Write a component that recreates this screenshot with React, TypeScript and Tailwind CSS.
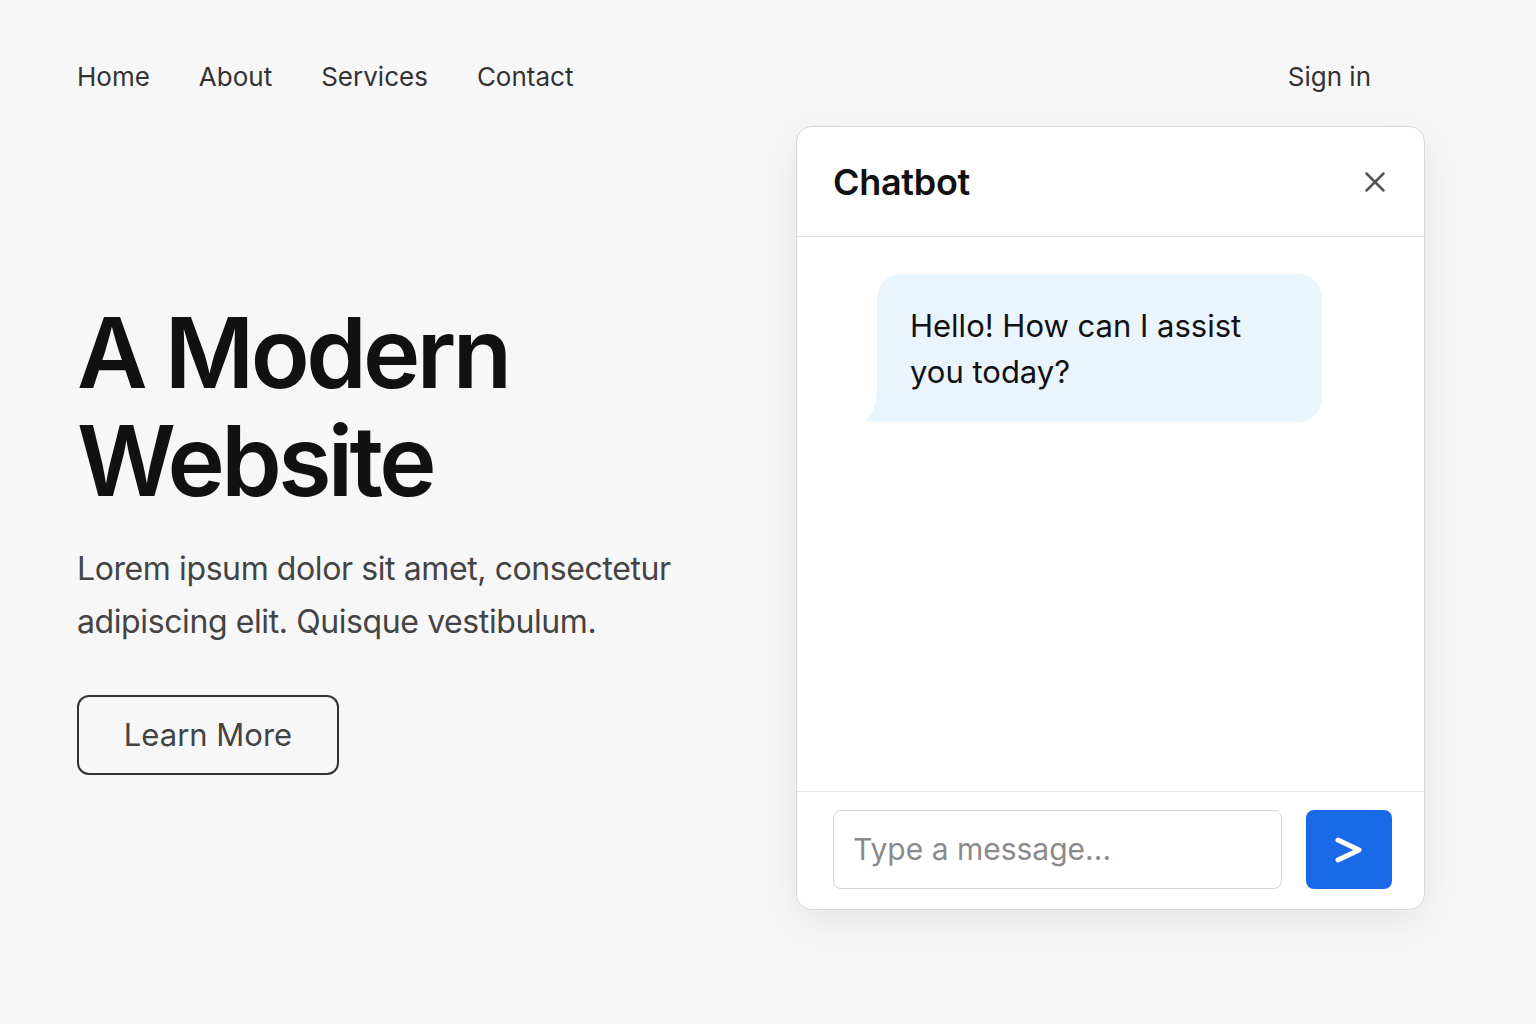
import { X } from "lucide-react";

const navLinks = ["Home", "About", "Services", "Contact"];

function BubbleTail() {
  return (
    <svg
      className="absolute -left-[14px] bottom-0"
      width="24"
      height="34"
      viewBox="0 0 24 34"
    >
      <path d="M14 0 C14 18 9 28 0 34 L24 34 L24 0 Z" fill="#eaf4fd" />
    </svg>
  );
}

function SendIcon() {
  return (
    <svg width="34" height="32" viewBox="0 0 34 32" fill="none">
      <path
        d="M6 6 L27 16 L6 26"
        stroke="white"
        strokeWidth="5"
        strokeLinecap="round"
        strokeLinejoin="round"
      />
    </svg>
  );
}

function ChatWidget() {
  return (
    <div className="w-[629px] h-[784px] flex flex-col bg-white border border-[#d9d9d9] rounded-[16px] shadow-[0_12px_40px_rgba(0,0,0,0.08)] overflow-hidden">
      <div className="h-[110px] shrink-0 flex items-center justify-between pl-[36px] pr-[32px] border-b border-[#e2e2e2]">
        <h2 className="text-[36px] font-semibold text-[#111] tracking-[-0.3px]">Chatbot</h2>
        <X className="w-[34px] h-[34px] text-[#555]" strokeWidth={1.8} />
      </div>
      <div className="flex-1 pt-[37px] pl-[80px]">
        <div className="relative w-[445px] h-[148px] bg-[#eaf4fd] rounded-[24px] rounded-bl-none pl-[33px] pt-[29px]">
          <BubbleTail />
          <p className="text-[31px] leading-[46px] text-[#111]">
            Hello! How can I assist
            <br />
            you today?
          </p>
        </div>
      </div>
      <div className="h-[118px] shrink-0 border-t border-[#e6e6e6] flex items-start pt-[18px] pl-[36px] gap-[24px]">
        <div className="w-[449px] h-[79px] border border-[#d4d4d4] rounded-[8px] flex items-center pl-[19px]">
          <span className="text-[30px] text-[#8a8a8a]">Type a message...</span>
        </div>
        <button className="w-[86px] h-[79px] bg-[#1a6ae8] rounded-[8px] flex items-center justify-center">
          <SendIcon />
        </button>
      </div>
    </div>
  );
}

export default function App() {
  return (
    <div className="min-h-[1024px] w-full bg-[#f7f7f7] font-['Inter','Noto_Sans',sans-serif]">
      <header className="h-[126px] flex items-start justify-between pt-[60px] pl-[77px] pr-[165px]">
        <nav className="flex gap-[49px]">
          {navLinks.map((link) => (
            <a key={link} className="text-[26px] leading-[34px] text-[#333]">
              {link}
            </a>
          ))}
        </nav>
        <a className="text-[26px] leading-[34px] text-[#333]">Sign in</a>
      </header>
      <main className="flex">
        <div className="flex-1 pl-[77px] pt-[173px]">
          <h1 className="text-[97px] leading-[108px] font-semibold text-[#111] tracking-[-3.6px]">
            A Modern
            <br />
            Website
          </h1>
          <p className="mt-[27px] text-[32px] leading-[53px] text-[#444] tracking-[-0.4px]">
            Lorem ipsum dolor sit amet, consectetur
            <br />
            adipiscing elit. Quisque vestibulum.
          </p>
          <button className="mt-[47px] w-[262px] h-[80px] border-2 border-[#333] rounded-[12px] text-[31px] text-[#444]">
            Learn More
          </button>
        </div>
        <div className="mr-[111px]">
          <ChatWidget />
        </div>
      </main>
    </div>
  );
}
